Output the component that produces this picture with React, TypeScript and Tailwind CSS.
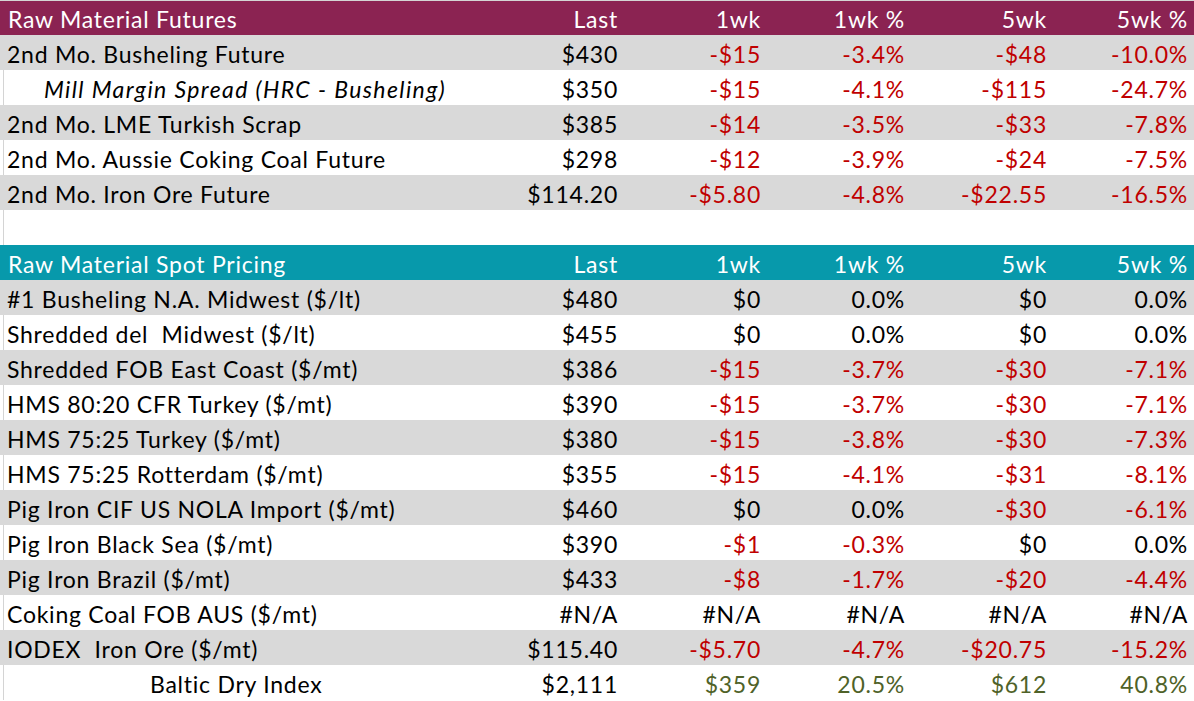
const RED = "text-[#c00000]";
const GREEN = "text-[#4f6228]";

type Row = {
  label: string;
  last: string;
  v: [string, string, string, string];
  tone: "red" | "black" | "green";
  gray: boolean;
  kind?: "italic" | "indent";
};

const futures: Row[] = [
  { label: "2nd Mo. Busheling Future", last: "$430", v: ["-$15", "-3.4%", "-$48", "-10.0%"], tone: "red", gray: true },
  { label: "Mill Margin Spread (HRC - Busheling)", last: "$350", v: ["-$15", "-4.1%", "-$115", "-24.7%"], tone: "red", gray: false, kind: "italic" },
  { label: "2nd Mo. LME Turkish Scrap", last: "$385", v: ["-$14", "-3.5%", "-$33", "-7.8%"], tone: "red", gray: true },
  { label: "2nd Mo. Aussie Coking Coal Future", last: "$298", v: ["-$12", "-3.9%", "-$24", "-7.5%"], tone: "red", gray: false },
  { label: "2nd Mo. Iron Ore Future", last: "$114.20", v: ["-$5.80", "-4.8%", "-$22.55", "-16.5%"], tone: "red", gray: true },
];

const spot: Row[] = [
  { label: "#1 Busheling N.A. Midwest ($/lt)", last: "$480", v: ["$0", "0.0%", "$0", "0.0%"], tone: "black", gray: true },
  { label: "Shredded del  Midwest ($/lt)", last: "$455", v: ["$0", "0.0%", "$0", "0.0%"], tone: "black", gray: false },
  { label: "Shredded FOB East Coast ($/mt)", last: "$386", v: ["-$15", "-3.7%", "-$30", "-7.1%"], tone: "red", gray: true },
  { label: "HMS 80:20 CFR Turkey ($/mt)", last: "$390", v: ["-$15", "-3.7%", "-$30", "-7.1%"], tone: "red", gray: false },
  { label: "HMS 75:25 Turkey ($/mt)", last: "$380", v: ["-$15", "-3.8%", "-$30", "-7.3%"], tone: "red", gray: true },
  { label: "HMS 75:25 Rotterdam ($/mt)", last: "$355", v: ["-$15", "-4.1%", "-$31", "-8.1%"], tone: "red", gray: false },
  { label: "Pig Iron CIF US NOLA Import ($/mt)", last: "$460", v: ["$0", "0.0%", "-$30", "-6.1%"], tone: "black", gray: true },
  { label: "Pig Iron Black Sea ($/mt)", last: "$390", v: ["-$1", "-0.3%", "$0", "0.0%"], tone: "black", gray: false },
  { label: "Pig Iron Brazil ($/mt)", last: "$433", v: ["-$8", "-1.7%", "-$20", "-4.4%"], tone: "red", gray: true },
  { label: "Coking Coal FOB AUS ($/mt)", last: "#N/A", v: ["#N/A", "#N/A", "#N/A", "#N/A"], tone: "black", gray: false },
  { label: "IODEX  Iron Ore ($/mt)", last: "$115.40", v: ["-$5.70", "-4.7%", "-$20.75", "-15.2%"], tone: "red", gray: true },
  { label: "Baltic Dry Index", last: "$2,111", v: ["$359", "20.5%", "$612", "40.8%"], tone: "green", gray: false, kind: "indent" },
];

const colW = ["w-[143px] pr-[4px]", "w-[144px] pr-[4px]", "w-[142px] pr-[4px]", "w-[143px] pr-[6px]"];

// thin grid line down the left edge of the white cells
const WHITE = "bg-white shadow-[inset_3px_0_0_#fff,inset_4px_0_0_#d4d4d4]";

function toneOf(text: string, tone: Row["tone"]) {
  if (tone === "green") return GREEN;
  if (text.startsWith("-")) return RED;
  return "text-black";
}

const Header = ({ title, bg, h }: { title: string; bg: string; h: string }) => (
  <div className={`flex items-center text-white ${h} ${bg}`}>
    <div className="flex-1 pl-[8px] whitespace-pre">{title}</div>
    <div className="w-[150px] pr-[4px] text-right">Last</div>
    <div className={`${colW[0]} text-right`}>1wk</div>
    <div className={`${colW[1]} text-right`}>1wk %</div>
    <div className={`${colW[2]} text-right`}>5wk</div>
    <div className={`${colW[3]} text-right`}>5wk %</div>
  </div>
);

const DataRow = ({ row }: { row: Row }) => (
  <div className={`flex h-[35px] items-center pt-[3px] ${row.gray ? "bg-[#d9d9d9]" : WHITE}`}>
    <div
      className={`flex-1 whitespace-pre ${
        row.kind === "italic"
          ? "pl-[44px] italic tracking-[1.4px]"
          : row.kind === "indent"
            ? "pl-[150px]"
            : "pl-[7px]"
      }`}
    >
      {row.label}
    </div>
    <div className="w-[150px] pr-[4px] text-right">{row.last}</div>
    {row.v.map((x, i) => (
      <div key={i} className={`${colW[i]} text-right ${toneOf(x, row.tone)}`}>
        {x}
      </div>
    ))}
  </div>
);

export default function App() {
  return (
    <div className="h-[701px] w-[1194px] overflow-hidden bg-white font-['Lato',sans-serif] text-[23px] leading-none tracking-[0.75px] text-black">
      <div className="h-[1px] bg-[#d4d4d4]" />
      <Header title="Raw Material Futures" bg="bg-[#8b2352]" h="h-[34px] pt-[2px]" />
      {futures.map((r) => (
        <DataRow key={r.label} row={r} />
      ))}
      <div className={`h-[35px] ${WHITE}`} />
      <Header title="Raw Material Spot Pricing" bg="bg-[#0799ab]" h="h-[35px] pt-[3px]" />
      {spot.map((r) => (
        <DataRow key={r.label} row={r} />
      ))}
    </div>
  );
}
